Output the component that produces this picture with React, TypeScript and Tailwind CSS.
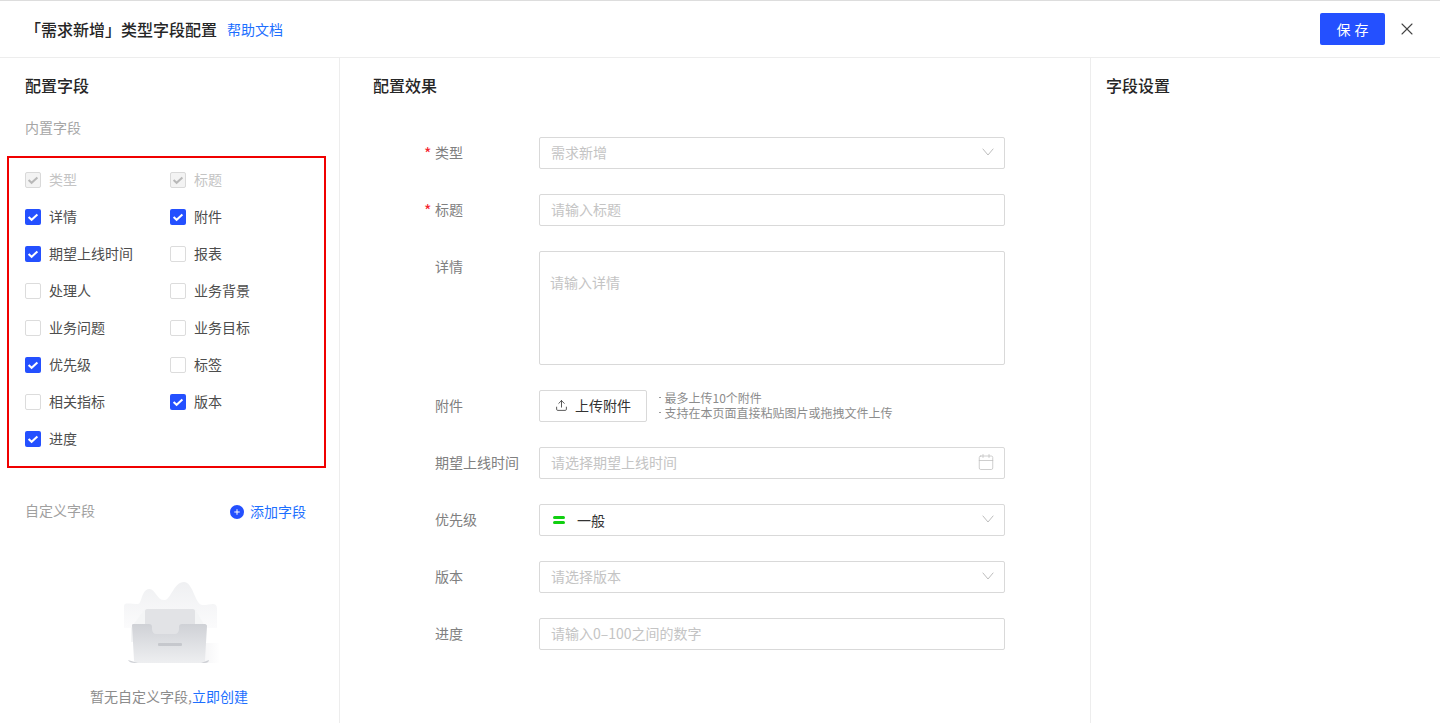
import { Plus, Upload, X, Calendar } from "lucide-react";
import type { ReactNode } from "react";

const BLUE = "bg-[#2450ff]";

type Field = { name: string; state: "disabled" | "on" | "off" };

const builtinFields: Field[] = [
  { name: "类型", state: "disabled" },
  { name: "标题", state: "disabled" },
  { name: "详情", state: "on" },
  { name: "附件", state: "on" },
  { name: "期望上线时间", state: "on" },
  { name: "报表", state: "off" },
  { name: "处理人", state: "off" },
  { name: "业务背景", state: "off" },
  { name: "业务问题", state: "off" },
  { name: "业务目标", state: "off" },
  { name: "优先级", state: "on" },
  { name: "标签", state: "off" },
  { name: "相关指标", state: "off" },
  { name: "版本", state: "on" },
  { name: "进度", state: "on" },
];

const CheckBox = ({ state }: { state: Field["state"] }) => {
  if (state === "off") {
    return <span className="mt-[2px] h-4 w-4 rounded-[2px] border border-[#dcdcdc] bg-white" />;
  }
  const disabled = state === "disabled";
  return (
    <span
      className={
        disabled
          ? "mt-[2px] flex h-4 w-4 items-center justify-center rounded-[2px] border border-[#d9d9d9] bg-[#f3f3f3]"
          : `mt-[2px] flex h-4 w-4 items-center justify-center rounded-[2px] ${BLUE}`
      }
    >
      <svg viewBox="0 0 12 12" className="h-3 w-3" fill="none">
        <path
          d="M1.6 6 4.6 8.8 10.4 3.4"
          stroke={disabled ? "#b8b8b8" : "#ffffff"}
          strokeWidth="2"
        />
      </svg>
    </span>
  );
};

const FormRow = ({
  label,
  required,
  children,
  alignTop,
}: {
  label: string;
  required?: boolean;
  children: ReactNode;
  alignTop?: boolean;
}) => (
  <div className={alignTop ? "flex items-start" : "flex items-center"}>
    <div className={alignTop ? "relative w-[104px] pt-[5px] text-[#808080]" : "relative w-[104px] pb-[2px] text-[#808080]"}>
      {required ? <span className="absolute left-[-11px] top-[-1px] text-[16px] text-[#f5222d]">*</span> : null}
      {label}
    </div>
    {children}
  </div>
);

const Box = ({ children }: { children: ReactNode }) => (
  <div className="flex h-8 w-[466px] items-center justify-between rounded-[2px] border border-[#d9d9d9] bg-white pr-[10px] pb-[2px] pl-[11px] text-[#c4c4c4]">
    {children}
  </div>
);

const Chevron = () => (
  <svg viewBox="0 0 12 8" className="h-2 w-3" fill="none">
    <path d="M.7.7 6 7 11.3.7" stroke="#bdbdbd" strokeWidth="1" />
  </svg>
);

const Hint = ({ children }: { children: ReactNode }) => (
  <p className="flex items-center">
    <span className="mr-[4px] ml-[1px] h-[1.5px] w-[1.5px] rounded-full bg-[#8c8c8c]" />
    {children}
  </p>
);

const EmptyArt = () => (
  <svg viewBox="0 0 96 84" className="ml-[5px] h-[84px] w-[96px]">
    <defs>
      <linearGradient id="cloud" x1="0" y1="0" x2="0" y2="1">
        <stop offset="0" stopColor="#eff0f2" />
        <stop offset="1" stopColor="#fbfbfc" />
      </linearGradient>
      <linearGradient id="tray" x1="0" y1="0" x2="0" y2="1">
        <stop offset="0" stopColor="#cfd1d6" />
        <stop offset="1" stopColor="#eeeff1" />
      </linearGradient>
      <linearGradient id="shade" x1="0" y1="0" x2="1" y2="0">
        <stop offset="0" stopColor="#f1f1f3" />
        <stop offset="1" stopColor="#ffffff" />
      </linearGradient>
    </defs>
    <path
      d="M0 24C0 20 6 22 14 22 18 22 17 8 25 7 31 6 33 19 41 18 47 17 50 0 60 0 69 0 71 22 78 23 84 24 93 18 93 27V46H0Z"
      fill="url(#cloud)"
    />
    <rect x="72" y="61" width="24" height="20" fill="url(#shade)" />
    <path d="M7 46 21 27H71L82 46V60H7Z" fill="#f4f5f6" />
    <path d="M21 29C21 28 22 27 23 27H69C70 27 71 28 71 29V52H21Z" fill="#e2e3e6" />
    <path
      d="M8 43C8 42 9 42 10 42H25C27 42 28 43 28 45V47C28 50 30 52 32 52H51C53 52 55 50 55 47V45C55 43 56 42 58 42H81C82 42 83 43 83 44L81 78C81 80 80 81 78 81H13C11 81 10 80 10 78Z"
      fill="url(#tray)"
    />
    <rect x="34" y="61" width="24" height="3" rx="1" fill="#c6c8cd" />
    <path d="M4 78 14 81H11C7 81 5 80 4 78Z M77 81 85 78C85 80 83 81 81 81Z" fill="#cfd1d6" />
  </svg>
);

export default function App() {
  return (
    <div
      className="flex h-[723px] w-[1440px] flex-col overflow-hidden border-t border-[#dddddd] bg-white text-[14px] text-[#333333]"
      style={{ fontFamily: '"Noto Sans CJK SC", "Noto Sans", sans-serif' }}
    >
      <header className="flex h-[57px] shrink-0 items-center justify-between border-b border-[#ededed] pr-[23px] pl-[25px]">
        <div className="flex items-center gap-[10px]">
          <h1 className="text-[16px] font-medium text-[#262626]">「需求新增」类型字段配置</h1>
          <a className="text-[#1d6fff]">帮助文档</a>
        </div>
        <div className="flex items-center gap-[12px]">
          <button className={`h-8 w-[65px] rounded-[2px] ${BLUE} pl-[4px] tracking-[4px] text-white`}>保存</button>
          <X className="h-5 w-5 text-[#444444]" strokeWidth={1.3} />
        </div>
      </header>

      <main className="flex min-h-0 flex-1">
        <aside className="w-[340px] shrink-0 border-r border-[#ededed]">
          <h2 className="mt-[15px] pl-[25px] text-[16px] leading-[24px] font-medium text-[#262626]">配置字段</h2>
          <p className="mt-[18px] pl-[25px] leading-[24px] text-[#a6a6a6]">内置字段</p>
          <div className="mt-[17px] ml-[7px] h-[312px] w-[319px] border-2 border-[#f00000] pt-[9px] pl-[16px]">
            <div className="grid grid-cols-[145px_1fr] gap-y-[13px]">
              {builtinFields.map((field) => (
                <label key={field.name} className="flex h-6 items-center gap-2">
                  <CheckBox state={field.state} />
                  <span className={field.state === "disabled" ? "text-[#c4c4c4]" : "text-[#4d4d4d]"}>{field.name}</span>
                </label>
              ))}
            </div>
          </div>
          <div className="mt-[32px] flex items-center justify-between pr-[33px] pl-[25px]">
            <span className="mb-[2px] text-[#a0a0a0]">自定义字段</span>
            <button className="flex items-center gap-[6px] text-[#1d6fff]">
              <span className={`flex h-[14px] w-[14px] items-center justify-center rounded-full ${BLUE}`}>
                <Plus className="h-2 w-2 text-white" strokeWidth={3} />
              </span>
              添加字段
            </button>
          </div>
          <div className="mt-[59px] flex flex-col items-center pr-[1px]">
            <EmptyArt />
            <p className="mt-[20px] text-[#8c8c8c]">
              暂无自定义字段,<a className="text-[#1d6fff]">立即创建</a>
            </p>
          </div>
        </aside>

        <section className="w-[751px] shrink-0 border-r border-[#ededed]">
          <h2 className="mt-[15px] pl-[33px] text-[16px] leading-[24px] font-medium text-[#262626]">配置效果</h2>
          <div className="mt-[40px] flex flex-col gap-[25px] pl-[95px]">
            <FormRow label="类型" required>
              <Box>
                需求新增
                <Chevron />
              </Box>
            </FormRow>
            <FormRow label="标题" required>
              <Box>请输入标题</Box>
            </FormRow>
            <FormRow label="详情" alignTop>
              <div className="h-[114px] w-[466px] rounded-[2px] border border-[#d9d9d9] pt-[20px] pl-[10px] text-[#c4c4c4]">
                请输入详情
              </div>
            </FormRow>
            <FormRow label="附件">
              <button className="flex h-8 w-[108px] items-center justify-center gap-[7px] rounded-[2px] border border-[#d9d9d9] pb-[2px] text-[#333333]">
                <Upload className="h-[13px] w-[13px]" strokeWidth={1.5} />
                上传附件
              </button>
              <div className="mb-[2px] ml-[11px] text-[12px] leading-[15px] text-[#8c8c8c]">
                <Hint>最多上传10个附件</Hint>
                <Hint>支持在本页面直接粘贴图片或拖拽文件上传</Hint>
              </div>
            </FormRow>
            <FormRow label="期望上线时间">
              <Box>
                请选择期望上线时间
                <Calendar className="-mr-[1px] h-[18px] w-[18px] text-[#bdbdbd]" strokeWidth={1} />
              </Box>
            </FormRow>
            <FormRow label="优先级">
              <Box>
                <span className="mt-[2px] flex items-center gap-[12px] text-[#333333]">
                  <span className="ml-[2px] flex w-[12px] flex-col gap-[2px]">
                    <span className="h-[3px] rounded-full bg-[#10cf10]" />
                    <span className="h-[3px] rounded-full bg-[#10cf10]" />
                  </span>
                  一般
                </span>
                <Chevron />
              </Box>
            </FormRow>
            <FormRow label="版本">
              <Box>
                请选择版本
                <Chevron />
              </Box>
            </FormRow>
            <FormRow label="进度">
              <Box>请输入0–100之间的数字</Box>
            </FormRow>
          </div>
        </section>

        <aside className="flex-1">
          <h2 className="mt-[15px] pl-[15px] text-[16px] leading-[24px] font-medium text-[#262626]">字段设置</h2>
        </aside>
      </main>
    </div>
  );
}
